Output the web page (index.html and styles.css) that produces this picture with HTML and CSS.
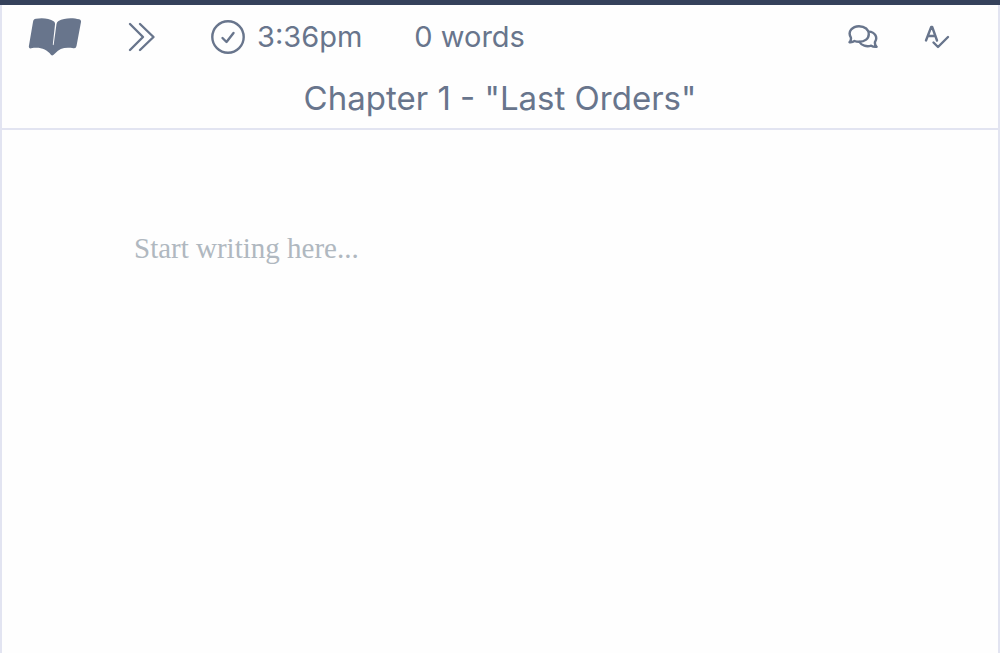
FILE: index.html
```html
<!DOCTYPE html>
<html lang="en">
<head>
  <meta charset="utf-8">
  <meta name="viewport" content="width=device-width, initial-scale=1">
  <title>Chapter 1</title>
  <link rel="stylesheet" href="styles.css">
</head>
<body>
  <div class="app">
    <header class="header">
      <div class="toolbar">
        <button class="icon-button book" type="button" aria-label="Book">
          <svg width="54" height="38" viewBox="0 0 54 38" fill="currentColor" aria-hidden="true">
            <path d="M5 4C5.400 1.800 6 1.200 8 .8C14-.4 21 .2 26 3.600Q27.200 4.500 27 6.500L24.800 26.500Q25.200 28 25.700 26.500L28.500 6Q28.800 4 30.500 2.900C36-.3 45-.4 51.200 1.300Q53.300 2 53 4L48.500 28Q48 30.700 45.500 30.200C37 28.900 31.500 30.300 27.500 35L25.300 37.100Q24 38 22.900 36.800C18.500 31 12 28.800 3.200 30.300Q.5 30.800.9 28Z"/>
          </svg>
        </button>
        <button class="icon-button expand" type="button" aria-label="Expand sidebar">
          <svg width="28" height="30" viewBox="0 0 28 30" class="line" aria-hidden="true">
            <path d="M2 2 15 15 2 28M12 2 25.500 15 12 28"/>
          </svg>
        </button>
        <div class="clock">
          <svg width="34" height="34" viewBox="0 0 34 34" class="line" aria-hidden="true">
            <circle cx="17" cy="17" r="15.700"/>
            <path d="M11.500 18 15.500 22 22.500 13"/>
          </svg>
          <span>3:36pm</span>
        </div>
        <span class="words">0 words</span>
        <div class="tools">
          <button class="icon-button" type="button" aria-label="Comments">
            <svg width="30" height="24" viewBox="0 0 30 24" class="line" aria-hidden="true">
              <path d="M2.800 12.300C-.7 6.500 4.500 1.200 11 1.200C17 1.200 20.800 4.800 20.800 9C20.800 13.500 17 16.800 11 16.800Q8.500 16.800 6.500 16Q4.500 17.500 1.500 17.200Q3.500 15 2.800 12.300Z"/>
              <path d="M20.800 6.600C27 6.800 30 12.500 27 17Q26.500 20 28.600 21.800Q25.500 22.200 23.200 20.700C18.500 22.200 13.500 20.500 11.500 17"/>
            </svg>
          </button>
          <button class="icon-button" type="button" aria-label="Check spelling">
            <svg width="26" height="24" viewBox="0 0 26 24" class="line" aria-hidden="true">
              <path d="M2 15.500 7.200 2H8.200L13 15.500M4 11H11.500M9.500 17.500 14 22 24 12"/>
            </svg>
          </button>
        </div>
      </div>
      <h1 class="title">Chapter 1 - "Last Orders"</h1>
    </header>
    <main class="page">
      <textarea class="editor" aria-label="Chapter text" placeholder="Start writing here..."></textarea>
    </main>
  </div>
</body>
</html>
```
FILE: styles.css
```css
* {
  box-sizing: border-box;
}

body {
  margin: 0;
  color: #68758c;
  background: #fefefe;
  font-family: Inter, "Liberation Sans", sans-serif;
}

.app {
  display: flex;
  flex-direction: column;
  min-height: 100vh;
  border: solid #e2e4f1;
  border-width: 0 2px;
}

.header {
  margin: 0 -2px;
  padding: 0 2px;
  border-top: 5px solid #35415b;
}

.toolbar {
  display: flex;
  align-items: center;
  height: 63px;
  padding: 0 48px 0 26px;
  font-size: 29px;
  font-weight: 400;
}

.icon-button {
  display: flex;
  padding: 0;
  border: 0;
  color: inherit;
  background: none;
  cursor: pointer;
}

.line {
  fill: none;
  stroke: currentColor;
  stroke-width: 2.4px;
  stroke-linecap: round;
  stroke-linejoin: round;
}

.expand {
  margin-left: 46px;
}

.clock {
  display: flex;
  align-items: center;
  gap: 12px;
  margin-left: 55px;
}

.words {
  margin-left: 52px;
}

.tools {
  display: flex;
  gap: 46px;
  margin-left: auto;
}

.title {
  margin: 0;
  border-bottom: 2px solid #e2e4f1;
  font-size: 33px;
  font-weight: 400;
  line-height: 60px;
  text-align: center;
}

.page {
  display: flex;
  flex: 1;
  padding: 100px 132px 0;
}

.editor {
  flex: 1;
  padding: 0;
  border: 0;
  outline: 0;
  resize: none;
  color: #68758c;
  background: transparent;
  font-family: "Liberation Serif", serif;
  font-size: 29px;
  line-height: 36px;
}

.editor::placeholder {
  color: #b0b8c0;
  opacity: 1;
}
```
